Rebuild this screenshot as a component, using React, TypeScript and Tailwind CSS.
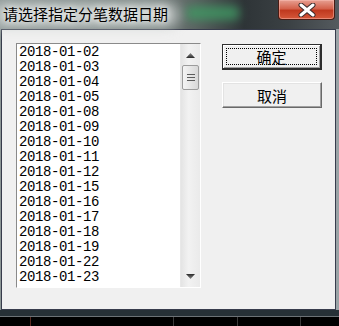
import React from "react";

const dates = [
  "2018-01-02",
  "2018-01-03",
  "2018-01-04",
  "2018-01-05",
  "2018-01-08",
  "2018-01-09",
  "2018-01-10",
  "2018-01-11",
  "2018-01-12",
  "2018-01-15",
  "2018-01-16",
  "2018-01-17",
  "2018-01-18",
  "2018-01-19",
  "2018-01-22",
  "2018-01-23",
];

function Arrow({ down }: { down?: boolean }) {
  return (
    <svg width="9" height="5" viewBox="0 0 9 5">
      <defs>
        <linearGradient id={down ? "ad" : "au"} x1="0" y1="0" x2="0" y2="1">
          <stop offset="0" stopColor={down ? "#2a2a2a" : "#8a8a8a"} />
          <stop offset="1" stopColor={down ? "#8a8a8a" : "#2a2a2a"} />
        </linearGradient>
      </defs>
      <polygon
        points={down ? "0,0 9,0 4.5,5" : "4.5,0 9,5 0,5"}
        fill={`url(#${down ? "ad" : "au"})`}
      />
    </svg>
  );
}

export default function App() {
  return (
    <div className="w-[339px] h-[326px] overflow-hidden relative flex flex-col bg-[linear-gradient(90deg,#8d9796_0%,#7a8482_45%,#596260_58%,#2e3437_72%,#3b4144_85%,#555b5f_100%)] font-['Noto_Sans_CJK_SC',sans-serif]">
      {/* title bar */}
      <div className="relative h-[29px] shrink-0">
        <div className="absolute left-[185px] top-[6px] w-[55px] h-[14px] rounded-full bg-[#3f9a63] blur-[5px] opacity-80" />
        <div className="absolute left-[-10px] top-[2px] w-[190px] h-[26px] rounded-full bg-[#c9cfcd] blur-[6px] opacity-70" />
        <div className="relative pl-[3px] pt-[4px] text-[15px] leading-[20px] text-black [text-shadow:0_0_6px_#fff,0_0_10px_#fff]">
          请选择指定分笔数据日期
        </div>
        {/* close button */}
        <div className="absolute left-[278px] top-0 w-[57px] h-[20px] rounded-b-[4px] border border-t-0 border-[#4a1c14] bg-[linear-gradient(180deg,#e7a092_0%,#d4624c_45%,#c0391f_55%,#d5583a_100%)] shadow-[inset_0_0_0_1px_rgba(255,200,190,0.45)] flex items-center justify-center">
          <svg width="20" height="14" viewBox="0 0 20 14">
            <path
              d="M4 2 L16 12 M16 2 L4 12"
              stroke="#3a2a2a"
              strokeWidth="5"
              strokeLinecap="round"
            />
            <path
              d="M4 2 L16 12 M16 2 L4 12"
              stroke="#ffffff"
              strokeWidth="3"
              strokeLinecap="round"
            />
          </svg>
        </div>
      </div>

      {/* client area */}
      <div className="flex shrink-0">
        <div className="ml-[1px] w-[335px] h-[281px] border border-[#373c4c] bg-[#f0f0f0] flex pl-[14px] pt-[13px] gap-[21px]">
          {/* listbox */}
          <div className="w-[185px] h-[245px] border-t border-l border-[#8a8a8a] border-r border-b border-r-white border-b-white flex">
            <div className="flex-1 bg-white pl-[2px] pt-[1px] overflow-hidden border-r border-[#e8e8e8] font-['Liberation_Mono',monospace] text-[14px] tracking-[-0.4px] leading-[15px] text-black">
              {dates.map((d) => (
                <div key={d} className="h-[15px]">
                  {d}
                </div>
              ))}
            </div>
            {/* scrollbar */}
            <div className="w-[19px] bg-[linear-gradient(90deg,#e4e4e4,#f2f2f2_40%,#eaeaea)] flex flex-col">
              <div className="h-[21px] flex items-center justify-center pt-[1px]">
                <Arrow />
              </div>
              <div className="mx-[1px] h-[25px] rounded-[2px] border border-[#9c9c9c] bg-[linear-gradient(90deg,#f4f4f4,#e6e6e6_50%,#d8d8d8)] flex flex-col items-center justify-center gap-[2px]">
                <div className="w-[8px] h-[1px] bg-[#5c5c5c]" />
                <div className="w-[8px] h-[1px] bg-[#5c5c5c]" />
                <div className="w-[8px] h-[1px] bg-[#5c5c5c]" />
              </div>
              <div className="flex-1" />
              <div className="h-[21px] flex items-center justify-center">
                <Arrow down />
              </div>
            </div>
          </div>

          {/* buttons */}
          <div className="w-[100px] pt-[1px] flex flex-col gap-[12px]">
            <div className="relative h-[26px] border border-[#2e2e2e] border-r-2 border-b-2 bg-[#f0f0f0] shadow-[inset_1px_1px_0_#fff,inset_-1px_-1px_0_#a0a0a0] flex items-center justify-center text-[15px] leading-none text-black">
              <div className="absolute inset-[3px] border border-dotted border-black" />
              确定
            </div>
            <div className="h-[26px] border border-t-white border-l-white border-r-[#696969] border-b-[#696969] bg-[#f0f0f0] shadow-[inset_-1px_-1px_0_#a0a0a0,inset_1px_1px_0_#e3e3e3] flex items-center justify-center text-[15px] leading-none text-black">
              取消
            </div>
          </div>
        </div>
        <div className="flex-1 bg-[#9aa3a6]" />
      </div>

      {/* area below window */}
      <div className="h-[6px] bg-[#263036] shrink-0" />
      <div className="flex-1 bg-black border-t border-[#6c7276] flex">
        <div className="ml-[30px] w-[1px] bg-[#5a2a22]" />
        <div className="ml-[142px] w-[1px] bg-[#3a3a3a]" />
        <div className="ml-[63px] w-[1px] bg-[#3a3a3a]" />
        <div className="ml-[62px] w-[1px] bg-[#3a3a3a]" />
      </div>
    </div>
  );
}
